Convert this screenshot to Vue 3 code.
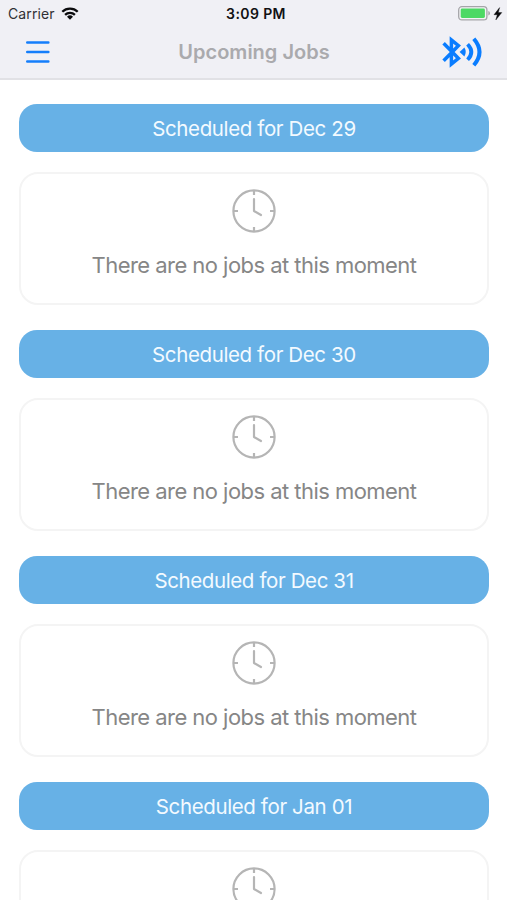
<script setup>
const days = [
  { date: 'Dec 29', message: 'There are no jobs at this moment' },
  { date: 'Dec 30', message: 'There are no jobs at this moment' },
  { date: 'Dec 31', message: 'There are no jobs at this moment' },
  { date: 'Jan 01', message: '' },
]
</script>

<template>
  <div class="screen">
    <header class="top">
      <div class="status">
        <div class="carrier">
          <span class="carrier-name">Carrier</span>
          <svg class="wifi" width="18" height="14" viewBox="0 0 18 14">
            <g fill="none" stroke="#0b0b0d" stroke-width="2.3">
              <path d="M1.3 4.7A11 11 0 0 1 16.7 4.7" />
              <path d="M4.1 7.9A7 7 0 0 1 13.9 7.9" />
            </g>
            <path d="M6 9.8A4.3 4.3 0 0 1 12 9.8L9 12.8Z" fill="#0b0b0d" />
          </svg>
        </div>
        <span class="time">3:09 PM</span>
        <svg class="battery" width="46" height="16" viewBox="0 0 46 16">
          <rect x="0.7" y="0.7" width="28.2" height="13.2" rx="3.2" fill="#f4f4f6" stroke="#a5a5a9" stroke-width="1.3" />
          <rect x="2.7" y="2.6" width="24.2" height="9.4" rx="1.4" fill="#4cd964" />
          <path d="M30.3 5Q32 5.6 32 7.3T30.3 9.6Z" fill="#a5a5a9" />
          <path d="M41.6 1.6L36 8.7H39.3L37.8 14L43.8 6.6H40.3Z" fill="#0b0b0d" stroke="#0b0b0d" stroke-width="0.4" />
        </svg>
      </div>
      <nav class="nav">
        <svg class="menu" width="24" height="24" viewBox="0 0 24 24">
          <path d="M1.2 2.5H22.4M1.2 12H22.4M1.2 21.5H22.4" stroke="#147efb" stroke-width="2.4" stroke-linecap="round" />
        </svg>
        <h1 class="title">Upcoming Jobs</h1>
        <svg class="bluetooth" width="42" height="32" viewBox="0 0 42 32">
          <g fill="none" stroke="#0a7dff" stroke-width="3.5">
            <path d="M2.6 7.2L17.4 22.4L10.4 28V4L17.4 9.6L2.6 24.8" />
            <path d="M26.6 8.2Q34 16 26.6 23.8" stroke-width="3.8" />
            <path d="M32.8 2.8Q44.2 16 32.8 29.2" stroke-width="4" />
          </g>
          <path d="M18.6 16L23.4 11.6Q26 16 23.4 20.4Z" fill="#0a7dff" />
        </svg>
      </nav>
    </header>

    <main class="list">
      <section v-for="day in days" :key="day.date" class="day">
        <h2 class="pill"><span>Scheduled for {{ day.date }}</span></h2>
        <div class="card">
          <svg class="clock" width="44" height="44" viewBox="0 0 44 44">
            <g fill="none" stroke="#b5b5b5" stroke-width="2.2">
              <circle cx="22" cy="22" r="20.6" />
              <path d="M22 1.5V6M22 38V42.5M1.5 22H6M38 22H42.5" />
              <path d="M22 10V22L29 26" stroke-linecap="round" stroke-linejoin="round" />
            </g>
          </svg>
          <p v-if="day.message" class="empty">{{ day.message }}</p>
        </div>
      </section>
    </main>
  </div>
</template>

<style>
body {
  margin: 0;
  overflow: hidden;
}
</style>

<style scoped>
.screen {
  width: 507px;
  height: 900px;
  overflow: hidden;
  background: #fff;
  font-family: Inter, "Liberation Sans", sans-serif;
}
.top {
  box-sizing: border-box;
  height: 80px;
  background: #f0f0f5;
  border-bottom: 2px solid #e1e1e5;
}
.status {
  display: grid;
  grid-template-columns: 1fr auto 1fr;
  align-items: center;
  height: 27px;
  padding: 0 3px 0 8px;
}
.carrier {
  display: flex;
  align-items: center;
  gap: 6px;
}
.carrier-name {
  font-size: 14px;
  line-height: 27px;
  letter-spacing: 0.1px;
  color: #303034;
}
.time {
  font-size: 14px;
  font-weight: 600;
  line-height: 27px;
  letter-spacing: 0.4px;
  color: #111113;
}
.battery {
  justify-self: end;
}
.nav {
  display: grid;
  grid-template-columns: 1fr auto 1fr;
  align-items: center;
  height: 50px;
  padding: 0 24px 0 25px;
}
.menu {
  margin-left: 1px;
}
.title {
  margin: 0;
  font-size: 20px;
  font-weight: 600;
  line-height: 50px;
  color: #aaaaad;
}
.bluetooth {
  justify-self: end;
}
.list {
  padding: 24px 18px 0 19px;
}
.day {
  margin-bottom: 25px;
}
.pill {
  display: flex;
  justify-content: center;
  align-items: center;
  height: 48px;
  margin: 0 0 20px;
  border-radius: 18px;
  background: #67b1e6;
  color: #f3faff;
  font-size: 20.5px;
  font-weight: 400;
  letter-spacing: -0.38px;
}
.card {
  box-sizing: border-box;
  display: flex;
  flex-direction: column;
  align-items: center;
  height: 133px;
  padding-top: 15px;
  border: 2px solid #f4f4f4;
  border-radius: 19px;
}
.clock {
  flex: none;
}
.empty {
  margin: 17px 0 0;
  font-size: 22px;
  line-height: 30px;
  letter-spacing: -0.54px;
  color: #868686;
  white-space: nowrap;
}
</style>
